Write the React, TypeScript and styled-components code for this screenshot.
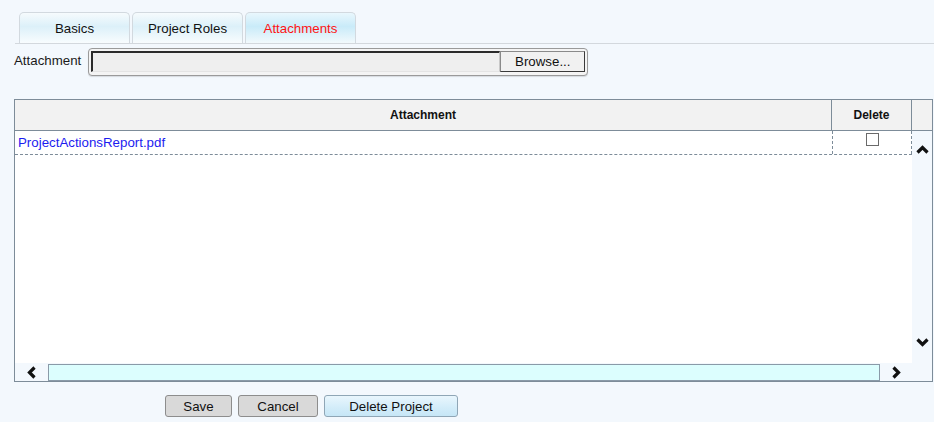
import styled, { createGlobalStyle } from 'styled-components';

const GlobalStyle = createGlobalStyle`
  html,
  body {
    margin: 0;
    background: #f3f8fd;
  }

  body {
    font-family: 'Liberation Sans', Arial, sans-serif;
    font-size: 13.3px;
    color: #1a1a1a;
  }
`;

const Page = styled.div`
  padding-top: 12px;
`;

const TabStrip = styled.div`
  display: flex;
  gap: 2px;
  margin-left: 15px;
  padding-left: 4px;
  border-bottom: 1px solid #d3d8dd;
`;

const Tab = styled.div<{ $active?: boolean }>`
  width: 111px;
  height: 31px;
  box-sizing: border-box;
  display: flex;
  align-items: center;
  justify-content: center;
  padding-top: 1px;
  border: 1px solid #d2d9df;
  border-bottom: none;
  border-radius: 5px 5px 0 0;
  color: ${({ $active }) => ($active ? '#ff1414' : '#111')};
  background: ${({ $active }) =>
    $active
      ? 'linear-gradient(to bottom, #e9f7fd 0%, #c9ebf9 45%, #e3f4fb 80%, #f2f9fc 100%)'
      : 'linear-gradient(to bottom, #f6fbfd 0%, #dcf0f9 45%, #eef8fc 80%, #f8fcfe 100%)'};
`;

const UploadRow = styled.div`
  display: flex;
  align-items: center;
  gap: 7px;
  margin-top: 4px;
  padding-left: 14px;
  height: 28px;
`;

const Label = styled.span`
  margin-top: -3px;
`;

const FileFrame = styled.div`
  width: 500px;
  height: 28px;
  box-sizing: border-box;
  display: flex;
  align-items: stretch;
  padding: 2px 2px 3px 2px;
  border: 1px solid #9a9a9a;
  border-radius: 4px;
  background: #f4f4f4;
  box-shadow: 0 1px 1px rgba(0, 0, 0, 0.12);
`;

const FileText = styled.div`
  flex: 1;
  border-top: 2px solid #2b2b2b;
  border-left: 2px solid #2b2b2b;
  border-right: 1px solid #c8c8c8;
  border-bottom: 1px solid #e4e4e4;
  background: #efefef;
`;

const BrowseButton = styled.button`
  width: 85px;
  font: inherit;
  color: #111;
  padding: 0;
  background: #f1f1f1;
  border: 1px solid #3a3a3a;
  border-top-color: #8a8a8a;
  border-left-color: #8a8a8a;
`;

const Grid = styled.div`
  width: 919px;
  height: 283px;
  box-sizing: border-box;
  margin: 23px 0 0 14px;
  border: 1px solid #7d8c99;
  display: grid;
  grid-template-rows: 31px 1fr;
`;

const HeaderRow = styled.div`
  display: grid;
  grid-template-columns: 817px 80px 1fr;
  background: #f2f2f2;
  border-bottom: 1px solid #7d8c99;
`;

const HeaderCell = styled.div<{ $last?: boolean }>`
  display: flex;
  align-items: center;
  justify-content: center;
  font-size: 12px;
  font-weight: bold;
  color: #111;
  border-right: ${({ $last }) => ($last ? 'none' : '1px solid #7d8c99')};
`;

const BodyArea = styled.div`
  display: grid;
  grid-template-columns: 897px 20px;
  grid-template-rows: 232px 18px;
`;

const Rows = styled.div`
  background: #fff;
`;

const Row = styled.div`
  display: grid;
  grid-template-columns: 817px 80px;
  height: 24px;
  box-sizing: border-box;
  border-bottom: 1px dashed #7d8c99;
`;

const NameCell = styled.div`
  display: flex;
  align-items: center;
  padding-left: 3px;
`;

const FileLink = styled.a`
  color: #1c1cf0;
  text-decoration: none;
`;

const DeleteCell = styled.div`
  display: flex;
  justify-content: center;
  border-left: 1px dashed #7d8c99;
  border-right: 1px dashed #7d8c99;
`;

const CheckBox = styled.input`
  appearance: none;
  width: 13px;
  height: 13px;
  margin: 2px 0 0 0;
  border: 1px solid #6a6a6a;
  background: #fff;
`;

const VScroll = styled.div`
  display: flex;
  flex-direction: column;
  justify-content: space-between;
  align-items: center;
  padding: 12px 0 14px 1px;
  background: #f3f8fd;
`;

const HScroll = styled.div`
  display: grid;
  grid-template-columns: 33px 1fr 32px;
  background: #f3f8fd;
`;

const ArrowBox = styled.div`
  display: flex;
  align-items: center;
  justify-content: center;
`;

const Track = styled.div`
  margin-top: 1px;
  border: 1px solid #8a9aa8;
  background: #dcfefe;
`;

const Corner = styled.div`
  background: #f3f8fd;
`;

const ButtonRow = styled.div`
  display: flex;
  gap: 6px;
  margin-top: 13px;
  padding-left: 165px;
`;

const ActionButton = styled.button<{ $width: number; $primary?: boolean }>`
  width: ${({ $width }) => $width}px;
  height: 22px;
  padding: 0;
  font: inherit;
  color: #111;
  border-radius: 3px;
  border: 1px solid ${({ $primary }) => ($primary ? '#8fa6b6' : '#8d8d8d')};
  background: ${({ $primary }) =>
    $primary
      ? 'linear-gradient(to bottom, #e9f6fd 0%, #d2ecf9 60%, #c6e6f6 100%)'
      : '#d9d9d9'};
`;

type Direction = 'up' | 'down' | 'left' | 'right';

const rotation: Record<Direction, number> = { up: 0, right: 90, down: 180, left: 270 };

const Chevron = ({ dir }: { dir: Direction }) => (
  <svg width="13" height="13" viewBox="0 0 13 13" style={{ transform: `rotate(${rotation[dir]}deg)` }}>
    <polyline points="1.5,9.5 6.5,4.5 11.5,9.5" fill="none" stroke="#111" strokeWidth="3.2" />
  </svg>
);

const tabs = ['Basics', 'Project Roles', 'Attachments'];

const App = () => (
  <Page>
    <GlobalStyle />
    <TabStrip>
      {tabs.map((t) => (
        <Tab key={t} $active={t === 'Attachments'}>
          {t}
        </Tab>
      ))}
    </TabStrip>

    <UploadRow>
      <Label>Attachment</Label>
      <FileFrame>
        <FileText />
        <BrowseButton>Browse...</BrowseButton>
      </FileFrame>
    </UploadRow>

    <Grid>
      <HeaderRow>
        <HeaderCell>Attachment</HeaderCell>
        <HeaderCell>Delete</HeaderCell>
        <HeaderCell $last />
      </HeaderRow>
      <BodyArea>
        <Rows>
          <Row>
            <NameCell>
              <FileLink href="#">ProjectActionsReport.pdf</FileLink>
            </NameCell>
            <DeleteCell>
              <CheckBox type="checkbox" />
            </DeleteCell>
          </Row>
        </Rows>
        <VScroll>
          <Chevron dir="up" />
          <Chevron dir="down" />
        </VScroll>
        <HScroll>
          <ArrowBox>
            <Chevron dir="left" />
          </ArrowBox>
          <Track />
          <ArrowBox>
            <Chevron dir="right" />
          </ArrowBox>
        </HScroll>
        <Corner />
      </BodyArea>
    </Grid>

    <ButtonRow>
      <ActionButton $width={67}>Save</ActionButton>
      <ActionButton $width={80}>Cancel</ActionButton>
      <ActionButton $width={134} $primary>
        Delete Project
      </ActionButton>
    </ButtonRow>
  </Page>
);

export default App;
